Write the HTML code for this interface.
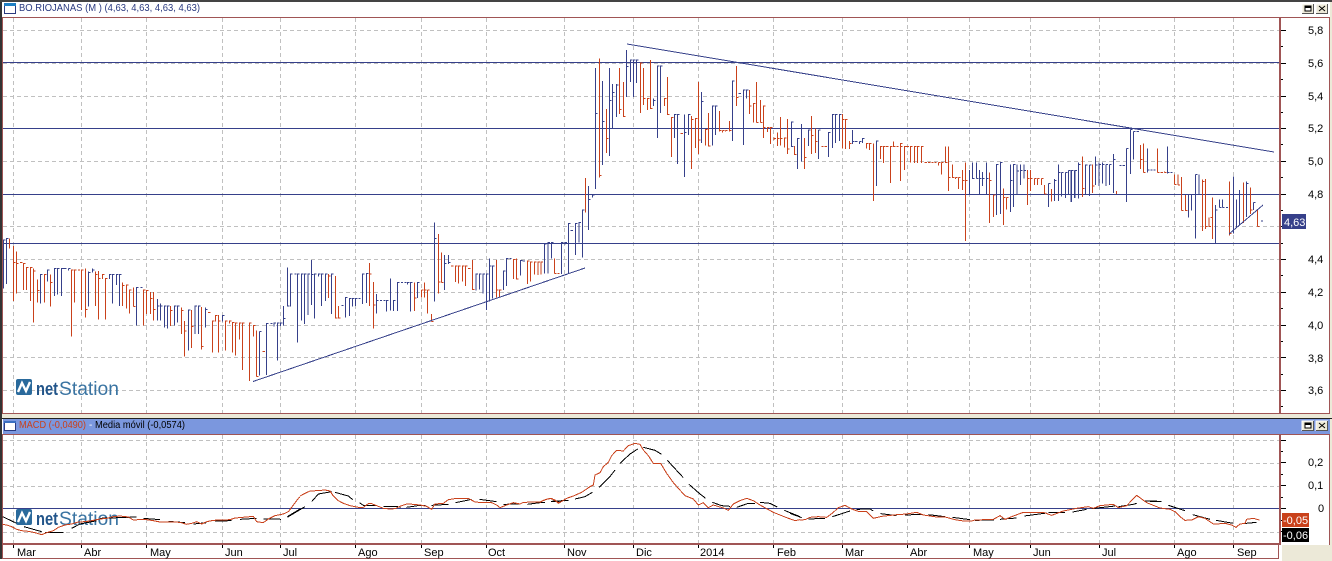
<!DOCTYPE html>
<html lang="es">
<head>
<meta charset="utf-8">
<title>BO.RIOJANAS</title>
<style>
html,body{margin:0;padding:0;background:#fff;width:1332px;height:561px;overflow:hidden}
svg{display:block;position:absolute;left:0;top:0}
text{font-family:"Liberation Sans",sans-serif}
.ax{font-size:11px;fill:#000}
.mo{font-size:11px;fill:#000}
.b{fill:none;stroke:#36408a;stroke-width:3;shape-rendering:crispEdges}
.r{fill:none;stroke:#c9411b;stroke-width:3;shape-rendering:crispEdges}
.k{fill:none;stroke:#000;stroke-width:3;shape-rendering:crispEdges}
.m{fill:none;stroke:#c9411b;stroke-width:3;shape-rendering:crispEdges}
</style>
</head>
<body>
<svg width="1332" height="561" viewBox="0 0 1332 561" xmlns="http://www.w3.org/2000/svg">
<!-- window chrome -->
<rect x="0" y="0" width="1332" height="561" fill="#fff"/>
<rect x="1330" y="0" width="2" height="561" fill="#ece9d8"/>
<rect x="0" y="0" width="1332" height="2" fill="#444"/>
<rect x="0" y="414" width="1332" height="4" fill="#ece9d8"/>
<rect x="0" y="418" width="1332" height="1" fill="#222"/>
<rect x="3" y="419" width="1327" height="15" fill="#7b97de"/>
<rect x="0" y="2" width="2" height="557" fill="#333"/>
<rect x="2" y="17" width="1" height="396" fill="#a05555"/>
<rect x="2" y="434" width="1" height="125" fill="#a05555"/>
<rect x="2" y="17" width="1328" height="1" fill="#a05555"/>
<rect x="2" y="413" width="1328" height="1" fill="#a05555"/>
<rect x="2" y="434" width="1328" height="1" fill="#a05555"/>
<rect x="1329" y="17" width="1" height="397" fill="#a05555"/>
<rect x="1329" y="434" width="1" height="111" fill="#a05555"/>
<rect x="1279" y="17" width="2" height="397" fill="#a05555"/>
<rect x="1279" y="434" width="2" height="111" fill="#a05555"/>
<rect x="2" y="543" width="1279" height="2" fill="#a05555"/>
<rect x="2" y="558" width="1277" height="1" fill="#a05555"/>
<rect x="1278" y="545" width="1" height="14" fill="#a05555"/>
<rect x="1282" y="545" width="50" height="16" fill="#ece9d8"/>
<rect x="0" y="559" width="1282" height="2" fill="#fff"/>

<!-- title icons -->
<rect x="4.5" y="3.5" width="11" height="10" fill="#fff" stroke="#2a3a80"/>
<rect x="4" y="3" width="12" height="3" fill="#1f7fc4"/>
<rect x="4.5" y="421.5" width="11" height="9" fill="#fff" stroke="#2a3a80"/>
<rect x="4" y="421" width="12" height="2" fill="#3a6fc0"/>

<text x="19" y="11" font-size="10" fill="#2a3a80" textLength="181" lengthAdjust="spacingAndGlyphs">BO.RIOJANAS (M ) (4,63, 4,63, 4,63, 4,63)</text>
<text x="19" y="428" font-size="10" fill="#c9411b" textLength="67" lengthAdjust="spacingAndGlyphs">MACD (-0,0490)</text>
<text x="89" y="428" font-size="10" fill="#fff">-</text>
<text x="95" y="428" font-size="10" fill="#000" textLength="90" lengthAdjust="spacingAndGlyphs">Media móvil (-0,0574)</text>

<!-- window buttons -->
<g>
<rect x="1302" y="4" width="12" height="10" fill="#ece9d8"/><path d="M1302 14V4H1314" fill="none" stroke="#fff"/><path d="M1302 13.5H1313.5V4" fill="none" stroke="#555"/>
<rect x="1305" y="6" width="6" height="5" fill="#fff" stroke="#000"/><rect x="1305" y="6" width="6" height="2" fill="#000"/>
<rect x="1316" y="4" width="12" height="10" fill="#ece9d8"/><path d="M1316 14V4H1328" fill="none" stroke="#fff"/><path d="M1316 13.5H1327.5V4" fill="none" stroke="#555"/>
<path d="M1319 6L1325 11M1325 6L1319 11" stroke="#000" fill="none"/>
<rect x="1302" y="421" width="12" height="10" fill="#ece9d8"/><path d="M1302 431V421H1314" fill="none" stroke="#fff"/><path d="M1302 430.5H1313.5V421" fill="none" stroke="#555"/>
<rect x="1305" y="423" width="6" height="5" fill="#fff" stroke="#000"/><rect x="1305" y="423" width="6" height="2" fill="#000"/>
<rect x="1316" y="421" width="12" height="10" fill="#ece9d8"/><path d="M1316 431V421H1328" fill="none" stroke="#fff"/><path d="M1316 430.5H1327.5V421" fill="none" stroke="#555"/>
<path d="M1319 423L1325 428M1325 423L1319 428" stroke="#000" fill="none"/>
</g>

<!-- grid top -->
<g stroke="#c0c0c0" stroke-width="1" stroke-dasharray="4 3" fill="none" shape-rendering="crispEdges">
<path d="M3 30.5H1279M3 63.5H1279M3 96.5H1279M3 161.5H1279M3 226.5H1279M3 259.5H1279M3 292.5H1279M3 325.5H1279M3 357.5H1279M3 390.5H1279"/>
<path d="M13.5 18V413M81.5 18V413M146.5 18V413M222.5 18V413M280.5 18V413M355.5 18V413M421.5 18V413M486.5 18V413M564.5 18V413M633.5 18V413M698.5 18V413M773.5 18V413M842.5 18V413M907.5 18V413M969.5 18V413M1030.5 18V413M1099.5 18V413M1174.5 18V413M1233.5 18V413"/>
<path d="M3 440.5H1279M3 463.5H1279M3 486.5H1279M3 532.5H1279"/>
<path d="M13.5 435V543M81.5 435V543M146.5 435V543M222.5 435V543M280.5 435V543M355.5 435V543M421.5 435V543M486.5 435V543M564.5 435V543M633.5 435V543M698.5 435V543M773.5 435V543M842.5 435V543M907.5 435V543M969.5 435V543M1030.5 435V543M1099.5 435V543M1174.5 435V543M1233.5 435V543"/>
</g>

<!-- logos -->
<g id="logo1">
<rect x="16" y="379" width="16" height="16" rx="2" fill="#2a6a9c"/>
<path d="M18 392L22 383L26 391L30 382" fill="none" stroke="#fff" stroke-width="2.4"/>
<text x="36" y="395" font-size="18" font-weight="bold" fill="#22558a" textLength="22" lengthAdjust="spacingAndGlyphs">net</text>
<text x="59" y="395" font-size="19" fill="#3a74a2" textLength="60" lengthAdjust="spacingAndGlyphs">Station</text>
</g>
<g>
<rect x="16" y="509" width="16" height="16" rx="2" fill="#2a6a9c"/>
<path d="M18 522L22 513L26 521L30 512" fill="none" stroke="#fff" stroke-width="2.4"/>
<text x="36" y="525" font-size="18" font-weight="bold" fill="#22558a" textLength="22" lengthAdjust="spacingAndGlyphs">net</text>
<text x="59" y="525" font-size="19" fill="#3a74a2" textLength="60" lengthAdjust="spacingAndGlyphs">Station</text>
</g>

<!-- horizontal blue levels -->
<g stroke="#36408a" stroke-width="1" shape-rendering="crispEdges" fill="none">
<path d="M3 62.5H1279M3 128.5H1279M3 194.5H1279M3 243.5H1279M3 508.5H1279"/>
</g>

<!-- bars z5 -->
<g transform="translate(0,220) scale(.33333)">
<path class="r" d="M28 55V85M41 78V243M41 128h6M50 95V220M50 130h6M60 127h8M76 130H70V210M86 142H80V210M97 142H91V243M100 145V308M100 153h6M112 178V248M112 212h6M139 163H133V248M151 163V260M151 187h6M220 150H214V350M230 150H224V248M234 150h6M250 150H244V270M256 145V293M256 268h6M287 155V258M287 163h6M296 153V299M296 175h6M313 163H307V177M323 175H317V299M367 187V258M367 196h6M385 195H379V266M395 210H389V281M401 202V260M401 260h6M437 210H431V317M446 212H440V282M451 216V282M451 235h6M461 216V302M461 268h6M512 258V318M512 272h6M544 262V342M544 272h6M553 303V410M553 333h6M575 270V384M575 320h6M605 261V389M605 380h6M624 277h7M643 303H637V398M653 287H647V305M656 285V398M656 303h6M682 303H676V392M694 303H688V310M703 308H697V398M713 309H707V407M724 309H718V359M733 309H727V450M754 309H748V483M766 316H760V350M770 332V470M770 470h6M788 394h7"/>
<path class="b" d="M16 60H10V205M26 55H20V192M128 163H122V250M148 150H142V185M169 145H163V228M179 145H173V223M190 145H184V228M190 145h9M206 145V152M206 145h6M266 155V260M266 158h6M277 145V158M277 150h6M334 163H328V177M344 163H338V251M355 163H349V195M365 163H359V258M415 202H409V317M421 203h6M472 237V302M472 258h6M482 250V302M482 258h6M499 258H493V323M508 258H502V326M529 258H523V316M539 258H533V308M571 270H565V392M591 258H585V342M601 258H595V342M616 262V322M616 268h6M673 287H667V305M779 335V467M779 335h6M806 310H800V465M812 310h6M828 309H822V320M838 309H832V422M848 309H842V318M851 258V316M851 295h6M862 142V260M862 258h6M878 162H872V260M883 162h6M898 162H892V368"/>
</g>

<!-- bars z6 -->
<g transform="translate(300,210) scale(.33333)">
<path class="b" d="M11 192H5V332M20 192H14V342M30 192H24V315M35 150V285M35 193h6M50 192H44V326M62 192H56V200M71 192H65V288M82 192H76V273M101 192H95V312M124 286h7M143 262H137V323M154 265H148V318M163 265H157V290M173 265H167V288M175 265h7M193 192H187V282M205 190H199V279M229 252V310M229 271h6M240 271h6M250 271h6M266 271H260V305M271 205V302M287 271H281V303M299 217H293V303M303 217h6M313 217h6M329 217H323V224M338 217H332V305M359 217H353V264M403 37V275M403 85h6M434 135V240M434 160h6M445 135V162M445 157h6M534 192H528V241M545 192H539V238M555 192H549V250M565 192H559V300M569 145V275M569 168h6M584 168H578V265M617 183H611V240M625 145H619V228M628 146h7M667 152H661V197M668 153h7M739 102H733V191M750 97H744V190M761 97H755V145M791 97H785V192M801 97H795V103M811 40H805V192M812 62h7M832 40H826V135M843 37H837V97M853 0H847V143M866 0V60"/>
<path class="r" d="M85 192V264M85 198h6M106 198V326M106 324h6M116 288V326M116 324h6M208 159V288M208 192h6M220 216V356M220 285h6M343 217V303M343 264h6M364 240V263M370 240h-6M374 217V263M374 240h6M383 240V311M389 240h-6M394 312V335M394 335h6M415 72V250M415 216h6M425 127V217M425 217h6M453 168h7M472 168H466V216M482 168H476V221M493 168H487V215M503 168H497V228M504 175h7M517 150V240M517 238h6M589 150V262M589 240h6M605 240H599V262M647 148H641V207M650 145V208M650 207h6M688 153H682V222M698 156H692V215M709 156H703V193M720 156H714V195M729 156H723V193M764 145V190M764 190h6M772 190h7M857 0V8"/>
</g>

<!-- bars z7 -->
<g transform="translate(570,40) scale(.33333)">
<path class="r" d="M46 414V510M88 55V412M88 406h6M109 207V339M109 295h6M148 84V222M148 209h6M160 126V231M160 230h6M217 69H211V219M220 84V195M220 176h6M238 175H232V210M241 60V207M241 205h6M289 175H283V198M292 111V225M292 223h6M310 232H304V351M332 280h7M364 228V387M364 238h6M382 235H376V324M385 126V342M385 300h6M412 268H406V316M415 219V320M415 318h6M448 213V274M448 271h6M457 271V278M457 271h6M467 271V275M467 271h6M478 243V275M478 271h6M499 78V198M499 172h6M538 150V222M538 198h6M556 190H550V248M559 126V248M559 247h6M571 180V248M571 247h6M586 198H580V294M580 262h6M598 262H592V276M608 262H602V312M612 293V300M612 295h6M622 277V318M622 295h6M631 231V316M631 295h6M649 294H643V322M652 237V342M652 327h6M673 318V345M673 343h6M703 294V387M703 352h6M724 228V342M724 286h6M736 265V339M736 304h6M754 319h7M764 319h7M817 222V325M817 238h6M832 238H826V327M838 303V327M838 310h6M895 310H889V325M904 310H898V330"/>
<path class="b" d="M55 438V510M55 478h6M67 465V472M67 465h6M76 84V447M76 220h6M97 123V375M97 244h6M118 84V348M118 181h6M127 132V265M127 157h6M139 132V231M139 135h6M169 30V171M169 79h6M187 60H181V126M196 60H190V171M205 60H199V129M250 175V198M250 181h6M268 78H262V294M277 78H271V219M319 223H313V294M328 223H322V372M343 223V411M343 277h6M361 223H355V285M394 156V309M394 184h6M433 198H427V316M442 198H436V285M493 123H487V303M506 160h7M526 150H520V315M536 150H530V175M670 246H664V321M664 319h6M689 295H683V387M694 252V364M722 270H716V318M745 270V357M745 270h6M782 277H776V351M793 223H787V324M803 223H797V309M815 223H809V303M847 270V312M847 305h6M855 305h7M868 305V312M868 305h6M883 295H877V309"/>
</g>

<!-- bars z8 -->
<g transform="translate(850,120) scale(.33333)">
<path class="r" d="M70 70V243M97 79H91V117M106 79H100V129M108 79h7M127 79H121V189M131 64V81M131 79h6M139 79h7M157 70H151V183M151 79h6M169 79H163V150M170 79h7M188 79H182V127M199 79H193V129M209 79H203V129M220 79H214V129M224 127h7M234 127h7M244 127h7M254 127h6M266 127V137M266 127h6M275 127V163M275 127h6M286 79V129M286 127h6M295 79V213M295 172h6M307 133V174M307 172h6M317 172V177M317 172h6M326 172V207M326 172h6M337 150V210M337 181h6M346 127V363M346 181h6M418 157V309M418 181h6M430 225V291M430 225h6M460 205V315M460 232h6M469 232V268M475 232h-6M532 150V255M532 175h6M541 150V213M541 175h6M553 175V195M559 175h-6M562 175V195M568 175h-6M574 175V195M580 175h-6M583 195V222M583 222h6M604 207V245"/>
<path class="b" d="M80 61V198M80 63h6M358 150V225M367 127V177M367 175h6M379 127V175M379 175h6M388 150V222M388 175h6M397 156V198M397 175h6M409 127V222M409 175h6M445 133H439V285M457 127H451V282M481 133V276M481 181h6M496 133H490V261M501 133V225M501 153h6M511 133V195M511 151h6M522 133V175M522 151h6M596 190V261M596 190h6M614 177V243M614 181h6M625 133V243M625 157h6M635 157V230M635 157h6M646 157V234M646 157h6M655 151V225M661 151h-6M664 151V246M670 151h-6M675 151V234M681 151h-6M686 127V235M686 133h6"/>
</g>

<!-- bars z9 -->
<g transform="translate(1070,120) scale(.33333)">
<path class="r" d="M37 109V231M37 205h6M68 133V219M68 198h6M139 213V222M211 75V147M211 118h6M220 70V158M220 158h6M262 85V157M262 157h6M272 157h7M283 155V158M283 157h6M313 163V194M313 194h6M324 163V195M324 195h6M334 171V271M334 271h6M346 225V273M346 271h6M397 178V333M397 185h6M407 177V327M407 320h6M417 292V320M417 320h6M427 232V357M427 292h-6M478 184V347M478 340h6M521 187V309M541 202V282M541 270h6M563 268V319M563 319h6"/>
<path class="b" d="M3 151V246M9 151h-6M14 151V234M20 151h-6M47 133V223M53 135h-6M58 135V228M64 135h-6M76 109V195M76 135h6M87 127V198M87 133h6M98 127V190M98 133h6M108 133V198M108 133h6M119 133V195M119 133h6M130 102V219M130 118h6M148 136h7M158 136h7M170 85V246M170 85h6M181 28V162M181 28h6M190 35V118M190 35h6M200 35h7M232 85V158M232 150h6M241 150h7M250 150h7M292 79V160M292 157h6M302 157h6M355 225V293M365 225V271M376 163V356M376 163h6M387 163V223M436 255V370M436 270h6M448 238V262M448 262h6M458 238V263M458 262h6M468 262h6M490 169V340M500 238V324M509 210V315M530 184V291M530 190h6M550 247V270M550 247h6M573 303h6"/>
</g>

<!-- trend lines -->
<g fill="none" stroke="#36408a" stroke-width="1" shape-rendering="crispEdges">
<path d="M253 381.5L585 268"/>
<path d="M627 44L1274 152"/>
<path d="M1229 234L1263 205"/>
</g>

<!-- MACD black -->
<g transform="translate(0,370) scale(.33333)"><path class="k" d="M8 440L50 460M72 470L125 485M135 488L190 487M215 475L240 462L290 452M300 445L410 441M430 445L480 449M505 454L555 458M580 462L620 458M645 453L695 452M720 448L770 445M790 447L840 447M862 440L900 417"/></g>
<g transform="translate(280,480) scale(.33333)"><path class="k" d="M0 118H3M22 112L75 80M95 65L115 42L155 35M165 37L205 48L218 59M238 68L250 76L290 77M310 79L348 79L362 82M380 82L420 76L437 76M455 76L505 73M527 68L575 58M598 58L650 65M670 73L720 72M742 73L780 68L795 67M815 65L838 65"/></g>
<g transform="translate(540,435) scale(.33333)"><path class="k" d="M33 199L85 196M105 192L135 185L157 172M178 157L212 122L225 105M240 85L270 57L293 42M310 37L345 46L365 58M382 76L430 128M447 148L480 177L497 190M517 202L545 212L570 214M590 217L625 205L645 205M660 202L690 205L712 216M733 226L780 245"/></g>
<g transform="translate(790,485) scale(.33333)"><path class="k" d="M0 85L35 98M55 102L105 100M127 95L180 78M200 73L240 72L250 78M272 86L320 92M345 90L395 88M415 89L465 95M487 97L540 104M555 106L612 105M630 103L680 99M703 93L770 84M775 83L825 83M848 81L890 73M905 71L975 63M985 65L1030 58L1040 55M1063 48L1113 49M1135 62L1140 62"/></g>
<g transform="translate(1150,400) scale(.33333)"><path class="k" d="M0 305L35 305M55 316L105 332M128 344L180 358M198 361L250 370M268 372L320 367"/></g>

<!-- MACD red -->
<g transform="translate(0,370) scale(.33333)"><path class="m" d="M8 463L20 465L35 470L50 478L65 482L85 484L105 488L125 494L140 488L160 482L175 472L195 465L215 462L235 456L255 455L275 452L300 447L320 445L340 440L360 438L385 441L400 450L415 449L440 449L460 452L480 456L515 456L540 457L560 463L575 460L590 455L605 462L620 455L640 451L690 449L705 444L740 441L760 439L770 455L790 458L805 447L825 437L850 432L865 425L880 405L895 385L900 381"/></g>
<g transform="translate(280,480) scale(.33333)"><path class="m" d="M60 48L75 40L90 33L110 32L135 30L150 33L160 48L175 62L190 70L210 77L235 82L250 82L265 71L275 71L290 77L310 85L330 87L345 86L365 77L380 72L400 73L420 75L440 79L455 88L465 72L490 70L505 59L530 55L565 55L585 66L610 68L635 68L650 75L660 83L680 75L700 68L720 72L730 67L780 66L800 58L815 55L835 68L840 68"/></g>
<g transform="translate(540,435) scale(.33333)"><path class="m" d="M0 202L12 195L30 190L45 195L55 205L60 202L80 190L100 183L125 172L150 155L160 150L165 120L180 113L190 95L205 82L215 62L230 46L250 48L265 32L285 25L300 28L310 45L325 62L340 85L362 85L380 115L400 143L415 160L435 182L460 192L475 210L490 203L505 218L520 210L550 219L565 226L580 207L600 197L620 190L640 197L660 210L700 232L740 248L765 257L780 254"/></g>
<g transform="translate(790,485) scale(.33333)"><path class="m" d="M30 105L45 104L60 97L85 95L110 97L130 82L145 68L165 61L185 72L205 79L230 80L250 100L275 94L320 89L350 87L380 82L400 90L440 96L465 96L495 104L520 108L545 108L555 105L610 103L630 92L645 103L665 95L700 82L760 82L785 91L820 78L860 70L895 65L910 70L930 62L970 58L985 68L1010 62L1040 31L1070 53L1110 69L1140 73"/></g>
<g transform="translate(1150,400) scale(.33333)"><path class="m" d="M60 328L75 335L90 350L105 361L125 360L145 350L165 355L190 372L200 372L225 370L245 375L258 382L270 372L285 370L290 358L310 355L328 360"/></g>

<!-- axis ticks -->
<g stroke="#000" stroke-width="1" fill="none" shape-rendering="crispEdges">
<path d="M1281 30.5h5M1281 63.5h5M1281 96.5h5M1281 128.5h5M1281 161.5h5M1281 194.5h5M1281 226.5h5M1281 259.5h5M1281 292.5h5M1281 325.5h5M1281 357.5h5M1281 390.5h5"/>
<path d="M1281 46.5h2M1281 79.5h2M1281 112.5h2M1281 144.5h2M1281 177.5h2M1281 210.5h2M1281 243.5h2M1281 275.5h2M1281 308.5h2M1281 341.5h2M1281 374.5h2M1281 406.5h2"/>
<path d="M1281 440.5h5M1281 462.5h5M1281 485.5h5M1281 508.5h5M1281 531.5h5"/>
<path d="M1281 451.5h2M1281 474.5h2M1281 497.5h2M1281 520.5h2"/>
<path d="M13.5 545v3M81.5 545v3M146.5 545v3M222.5 545v3M280.5 545v3M355.5 545v3M421.5 545v3M486.5 545v3M564.5 545v3M633.5 545v3M698.5 545v3M773.5 545v3M842.5 545v3M907.5 545v3M969.5 545v3M1030.5 545v3M1099.5 545v3M1174.5 545v3M1233.5 545v3"/>
</g>

<!-- axis labels -->
<text class="ax" x="1308" y="34">5,8</text>
<text class="ax" x="1308" y="67">5,6</text>
<text class="ax" x="1308" y="100">5,4</text>
<text class="ax" x="1308" y="132">5,2</text>
<text class="ax" x="1308" y="165">5,0</text>
<text class="ax" x="1308" y="198">4,8</text>
<text class="ax" x="1308" y="263">4,4</text>
<text class="ax" x="1308" y="296">4,2</text>
<text class="ax" x="1308" y="329">4,0</text>
<text class="ax" x="1308" y="362">3,8</text>
<text class="ax" x="1308" y="394">3,6</text>
<rect x="1282" y="214" width="24" height="15" fill="#36408a"/>
<text x="1284" y="226" font-size="11" fill="#fff">4,63</text>

<text class="ax" x="1308" y="466">0,2</text>
<text class="ax" x="1308" y="489">0,1</text>
<text class="ax" x="1318" y="512">0</text>
<rect x="1282" y="513" width="27" height="14" fill="#c9411b"/>
<text x="1283" y="524" font-size="11" fill="#fff">-0,05</text>
<rect x="1282" y="528" width="27" height="14" fill="#000"/>
<text x="1283" y="539" font-size="11" fill="#fff">-0,06</text>

<text class="mo" x="17" y="556">Mar</text>
<text class="mo" x="84" y="556">Abr</text>
<text class="mo" x="150" y="556">May</text>
<text class="mo" x="225" y="556">Jun</text>
<text class="mo" x="283" y="556">Jul</text>
<text class="mo" x="358" y="556">Ago</text>
<text class="mo" x="424" y="556">Sep</text>
<text class="mo" x="488" y="556">Oct</text>
<text class="mo" x="567" y="556">Nov</text>
<text class="mo" x="636" y="556">Dic</text>
<text class="mo" x="700" y="556">2014</text>
<text class="mo" x="777" y="556">Feb</text>
<text class="mo" x="845" y="556">Mar</text>
<text class="mo" x="910" y="556">Abr</text>
<text class="mo" x="973" y="556">May</text>
<text class="mo" x="1033" y="556">Jun</text>
<text class="mo" x="1102" y="556">Jul</text>
<text class="mo" x="1177" y="556">Ago</text>
<text class="mo" x="1237" y="556">Sep</text>
</svg>
</body>
</html>
